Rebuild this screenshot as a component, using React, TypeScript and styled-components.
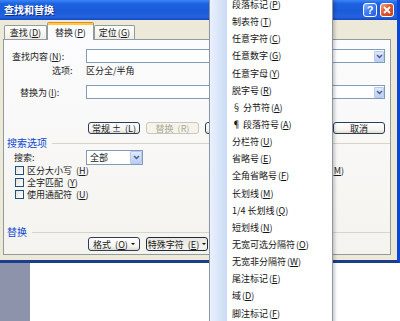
import React from "react";
import styled, { createGlobalStyle } from "styled-components";

const FONT = `"Noto Sans CJK SC", "Noto Sans", "Liberation Sans", sans-serif`;

const Global = createGlobalStyle`
  html, body { margin: 0; padding: 0; background: #ffffff; }
  body { font-family: ${FONT}; }
  *, *::before, *::after { box-sizing: border-box; }
`;

const Screen = styled.div`
  position: relative;
  width: 400px;
  height: 321px;
  overflow: hidden;
  display: flex;
  flex-direction: column;
  background: #ffffff;
  font-family: ${FONT};
  font-size: 9px;
  line-height: 1;
  color: #1a1a1a;
`;

const Dialog = styled.div`
  flex: none;
  height: 263px;
  display: flex;
  flex-direction: column;
  background: #ece9d8;
  border-right: 3px solid #0b46d6;
  border-bottom: 3px solid #1c3c8e;
`;

const TitleBar = styled.div`
  flex: none;
  height: 20px;
  display: flex;
  align-items: center;
  padding: 0 3px 0 4px;
  background: linear-gradient(#3b86f6 0%, #1d62e2 18%, #1b5bd9 55%, #2463de 85%, #1645c0 100%);
`;

const Title = styled.span`
  flex: 1;
  color: #ffffff;
  font-weight: 700;
  font-size: 10px;
  text-shadow: 1px 1px 0 #0c2c86;
`;

const CaptionButtons = styled.div`
  display: flex;
  gap: 3px;
`;

const CaptionButton = styled.div<{ $kind: "help" | "close" }>`
  width: 14px;
  height: 14px;
  border: 1px solid #ffffff;
  border-radius: 3px;
  display: flex;
  align-items: center;
  justify-content: center;
  color: #ffffff;
  font-family: "Liberation Sans", sans-serif;
  font-weight: 700;
  font-size: 11px;
  background: ${(p) =>
    p.$kind === "close"
      ? "linear-gradient(135deg, #f3a583 0%, #e2572d 45%, #c9421c 100%)"
      : "linear-gradient(135deg, #8fb7fb 0%, #3f7cf1 45%, #2a5fd8 100%)"};
`;

const Body = styled.div`
  flex: 1;
  display: flex;
  flex-direction: column;
  padding: 2px 6px 5px 3px;
`;

const TabRow = styled.div`
  flex: none;
  height: 17px;
  display: flex;
  align-items: flex-end;
  padding-left: 1px;
`;

const Tab = styled.div<{ $active?: boolean; $w: number }>`
  position: relative;
  z-index: ${(p) => (p.$active ? 2 : 1)};
  width: ${(p) => p.$w}px;
  height: ${(p) => (p.$active ? 18 : 14)}px;
  margin-bottom: ${(p) => (p.$active ? -1 : 0)}px;
  display: flex;
  align-items: center;
  justify-content: center;
  border: 1px solid #919b9c;
  border-bottom: none;
  border-radius: 2px 2px 0 0;
  border-top-color: ${(p) => (p.$active ? "#e68b2c" : "#919b9c")};
  box-shadow: ${(p) => (p.$active ? "inset 0 2px 0 #ffc840" : "none")};
  background: ${(p) => (p.$active ? "#fcfcfe" : "linear-gradient(#ffffff, #eeede6)")};
  padding-top: ${(p) => (p.$active ? 2 : 0)}px;
`;

const Panel = styled.div`
  position: relative;
  z-index: 1;
  flex: 1;
  display: flex;
  flex-direction: column;
  border: 1px solid #919b9c;
  background: linear-gradient(#fcfcfe, #f4f3ee);
`;

const FieldRow = styled.div<{ $mt: number; $h: number }>`
  flex: none;
  display: flex;
  align-items: center;
  height: ${(p) => p.$h}px;
  margin-top: ${(p) => p.$mt}px;
`;

const FieldLabel = styled.span<{ $indent: number }>`
  flex: none;
  width: 82px;
  padding-left: ${(p) => p.$indent}px;
  white-space: nowrap;
`;

const Combo = styled.div`
  flex: none;
  width: 299px;
  height: 14px;
  display: flex;
  align-items: center;
  justify-content: flex-end;
  background: #ffffff;
  border: 1px solid #7f9db9;
`;

const DropArrow = styled.div<{ $w: number; $h: number }>`
  width: ${(p) => p.$w}px;
  height: ${(p) => p.$h}px;
  display: flex;
  align-items: center;
  justify-content: center;
  border: 1px solid #b7c9f0;
  border-radius: 1px;
  background: linear-gradient(#e0e8fc, #bccdf6);
`;

const Select = styled.div`
  flex: none;
  width: 57px;
  height: 15px;
  display: flex;
  align-items: center;
  justify-content: space-between;
  padding: 0 0 0 3px;
  background: #ffffff;
  border: 1px solid #7f9db9;
`;

const ButtonRow = styled.div<{ $mt: number; $h: number }>`
  flex: none;
  display: flex;
  align-items: center;
  gap: 6px;
  height: ${(p) => p.$h}px;
  margin-top: ${(p) => p.$mt}px;
  padding-left: 84px;
  padding-right: 5px;
`;

const Button = styled.div<{ $w: number; $state?: "normal" | "disabled" | "pressed"; $push?: boolean }>`
  flex: none;
  width: ${(p) => p.$w}px;
  height: 100%;
  margin-left: ${(p) => (p.$push ? "auto" : "0")};
  display: flex;
  align-items: center;
  justify-content: center;
  gap: 3px;
  overflow: hidden;
  white-space: nowrap;
  border-radius: 3px;
  border: 1px solid ${(p) => (p.$state === "disabled" ? "#c9c7ba" : p.$state === "pressed" ? "#1b2a3c" : "#2c3e57")};
  color: ${(p) => (p.$state === "disabled" ? "#aca899" : "#1a1a1a")};
  background: ${(p) =>
    p.$state === "pressed"
      ? "linear-gradient(#e9e7df, #f5f4ef)"
      : p.$state === "disabled"
      ? "#f5f4ea"
      : "linear-gradient(#ffffff, #f5f4ef 70%, #dedbd0)"};
`;

const Caret = styled.span`
  width: 0;
  height: 0;
  border-left: 2px solid transparent;
  border-right: 2px solid transparent;
  border-top: 2px solid #111;
`;

const SectionHeader = styled.div<{ $mt: number }>`
  flex: none;
  display: flex;
  align-items: center;
  height: 10px;
  margin-top: ${(p) => p.$mt}px;
  padding-left: 3px;
  color: #0b46d0;
  font-size: 10px;
`;

const SectionLine = styled.div`
  flex: 1;
  height: 1px;
  margin-left: 5px;
  background: #d6d5c8;
`;

const CheckRow = styled.div`
  flex: none;
  display: flex;
  align-items: center;
  gap: 3px;
  height: 11.7px;
  padding-left: 11px;
`;

const CheckBox = styled.span`
  flex: none;
  width: 9px;
  height: 9px;
  border: 1px solid #1c5180;
  background: linear-gradient(135deg, #e2e2dc, #ffffff);
`;

const RightLabel = styled.span`
  margin-left: auto;
  margin-right: 46px;
  white-space: nowrap;
`;

const DocArea = styled.div`
  flex: 1;
  display: flex;
`;

const DocGutter = styled.div`
  width: 30px;
  background: #8d93aa;
`;

const DocPage = styled.div`
  flex: 1;
  background: #ffffff;
`;

const Menu = styled.div`
  position: absolute;
  z-index: 10;
  left: 209px;
  top: -4px;
  width: 124px;
  display: flex;
  flex-direction: column;
  border: 1px solid #8d97a8;
  border-top: none;
  background: linear-gradient(to right, #eaf1fc 0px, #cadbf5 17px, #ffffff 17px);
  box-shadow: 2px 2px 3px rgba(0, 0, 0, 0.2);
`;

const MenuItem = styled.div`
  height: 17.15px;
  display: flex;
  align-items: center;
  padding-left: 22px;
  white-space: nowrap;
  color: #141414;
`;

const Key = styled.span`
  margin-left: 1px;
  & > u {
    text-decoration-thickness: 1px;
    text-underline-offset: 1px;
  }
`;

const Mn = ({ k }: { k: string }) => (
  <Key>
    (<u>{k}</u>)
  </Key>
);

const Chevron = () => (
  <svg width="7" height="5" viewBox="0 0 7 5">
    <path d="M1 1 L3.5 3.5 L6 1" fill="none" stroke="#4a5e86" strokeWidth="1.5" />
  </svg>
);

const menuItems: [string, string][] = [
  ["段落标记", "P"],
  ["制表符", "T"],
  ["任意字符", "C"],
  ["任意数字", "G"],
  ["任意字母", "Y"],
  ["脱字号", "R"],
  ["§  分节符", "A"],
  ["¶  段落符号", "A"],
  ["分栏符", "U"],
  ["省略号", "E"],
  ["全角省略号", "F"],
  ["长划线", "M"],
  ["1/4  长划线", "Q"],
  ["短划线", "N"],
  ["无宽可选分隔符", "O"],
  ["无宽非分隔符", "W"],
  ["尾注标记", "E"],
  ["域", "D"],
  ["脚注标记", "F"],
];

export default function App() {
  return (
    <Screen>
      <Global />
      <Dialog>
        <TitleBar>
          <Title>查找和替换</Title>
          <CaptionButtons>
            <CaptionButton $kind="help">?</CaptionButton>
            <CaptionButton $kind="close">
              <svg width="8" height="8" viewBox="0 0 8 8">
                <path d="M1 1 L7 7 M7 1 L1 7" stroke="#fff" strokeWidth="1.8" />
              </svg>
            </CaptionButton>
          </CaptionButtons>
        </TitleBar>
        <Body>
          <TabRow>
            <Tab $w={43}>
              查找<Mn k="D" />
            </Tab>
            <Tab $w={47} $active>
              替换<Mn k="P" />
            </Tab>
            <Tab $w={41}>
              定位<Mn k="G" />
            </Tab>
          </TabRow>
          <Panel>
            <FieldRow $mt={9} $h={14}>
              <FieldLabel $indent={8}>
                查找内容<Mn k="N" />:
              </FieldLabel>
              <Combo>
                <DropArrow $w={10} $h={11}>
                  <Chevron />
                </DropArrow>
              </Combo>
            </FieldRow>
            <FieldRow $mt={1} $h={13}>
              <FieldLabel $indent={48}>选项:</FieldLabel>
              <span>区分全/半角</span>
            </FieldRow>
            <FieldRow $mt={8} $h={14}>
              <FieldLabel $indent={16}>
                替换为<Mn k="I" />:
              </FieldLabel>
              <Combo>
                <DropArrow $w={10} $h={11}>
                  <Chevron />
                </DropArrow>
              </Combo>
            </FieldRow>
            <ButtonRow $mt={23} $h={12}>
              <Button $w={52}>
                常规 ± <Mn k="L" />
              </Button>
              <Button $w={53} $state="disabled">
                替换<Mn k="R" />
              </Button>
              <Button $w={53} />
              <Button $w={53} />
              <Button $w={52} $push>
                取消
              </Button>
            </ButtonRow>
            <SectionHeader $mt={4}>
              搜索选项
              <SectionLine />
            </SectionHeader>
            <FieldRow $mt={2} $h={15}>
              <FieldLabel $indent={10}>搜索:</FieldLabel>
              <Select>
                全部
                <DropArrow $w={12} $h={13}>
                  <Chevron />
                </DropArrow>
              </Select>
            </FieldRow>
            <CheckRow>
              <CheckBox />
              区分大小写<Mn k="H" />
              <RightLabel>
                <Mn k="M" />
              </RightLabel>
            </CheckRow>
            <CheckRow>
              <CheckBox />
              全字匹配<Mn k="Y" />
            </CheckRow>
            <CheckRow>
              <CheckBox />
              使用通配符<Mn k="U" />
            </CheckRow>
            <SectionHeader $mt={27}>
              替换
              <SectionLine />
            </SectionHeader>
            <ButtonRow $mt={0} $h={14}>
              <Button $w={52}>
                格式<Mn k="O" />
                <Caret />
              </Button>
              <Button $w={62} $state="pressed">
                特殊字符<Mn k="E" />
                <Caret />
              </Button>
            </ButtonRow>
          </Panel>
        </Body>
      </Dialog>
      <DocArea>
        <DocGutter />
        <DocPage />
      </DocArea>
      <Menu>
        {menuItems.map(([label, k], i) => (
          <MenuItem key={i}>
            {label}
            <Mn k={k} />
          </MenuItem>
        ))}
      </Menu>
    </Screen>
  );
}
